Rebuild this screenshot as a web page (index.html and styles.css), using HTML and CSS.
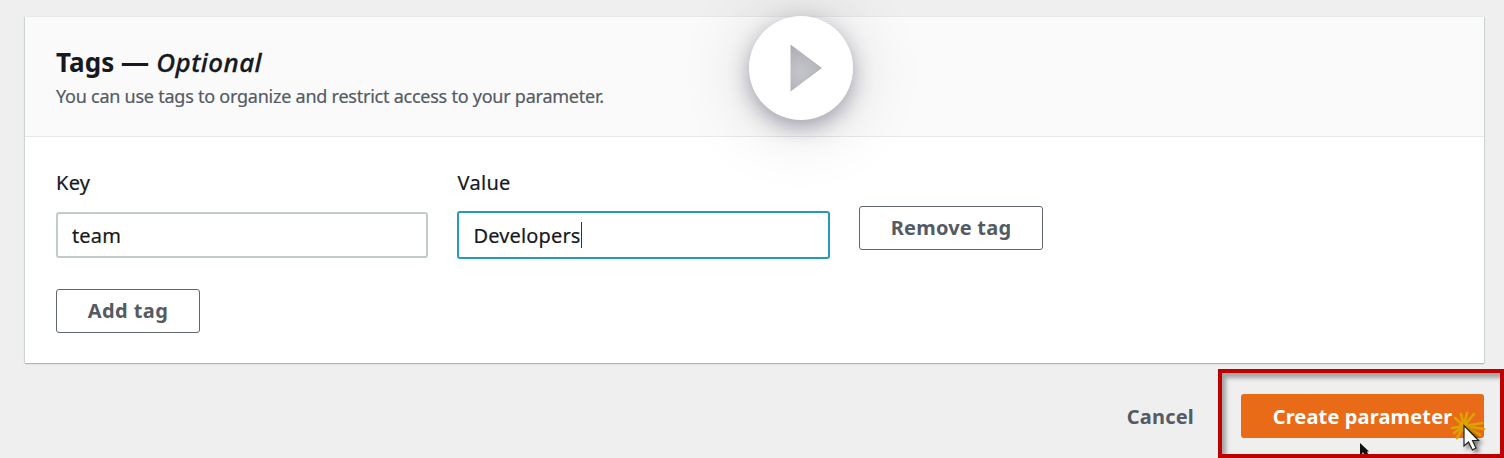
FILE: index.html
```html
<!DOCTYPE html>
<html lang="en">
<head>
<meta charset="utf-8">
<title>Create parameter</title>
<link rel="stylesheet" href="styles.css">
</head>
<body>
<main class="page">
  <section class="panel">
    <header class="panel-header">
      <h2 class="title">Tags <span class="dash">—</span> <em class="optional">Optional</em></h2>
      <p class="description">You can use tags to organize and restrict access to your parameter.</p>
    </header>
    <div class="panel-body">
      <div class="tag-row">
        <div class="field">
          <span class="label label-key">Key</span>
          <div class="input"><span class="team">team</span></div>
        </div>
        <div class="field">
          <span class="label label-value">Value</span>
          <div class="input focused"><span class="developers">Developers</span><span class="caret"></span></div>
        </div>
        <button class="button remove">Remove tag</button>
      </div>
      <button class="button add">Add tag</button>
    </div>
  </section>
  <footer class="actions">
    <span class="cancel">Cancel</span>
    <div class="highlight"><button class="button primary">Create parameter</button></div>
  </footer>
  <div class="play">
    <svg width="104" height="104" viewBox="0 0 104 104">
      <defs><radialGradient id="tri" gradientUnits="userSpaceOnUse" cx="52" cy="56" r="28"><stop offset="0" stop-color="#c4c4cb"/><stop offset="1" stop-color="#adadb2"/></radialGradient></defs>
      <path d="M41.500 28.500L73 52L41.500 75.500Z" fill="url(#tri)"/>
    </svg>
  </div>
  <svg class="pointer-small" width="12" height="12" viewBox="0 0 12 12"><path d="M2 1V12H4L5 10L6 12H10L9 9.500H11Z" fill="#111"/></svg>
  <svg class="click" width="46" height="48" viewBox="0 0 46 48">
    <path d="M14 16L11 4M14 16L5 8M14 16L2 18M14 16L4 23M14 16L7 28M14 16L24 4M14 16L17 3M14 16L32 13M14 16L34 19M14 16L30 25M14 16L21 29" stroke="#dda300" stroke-width="2.700" stroke-linecap="round"/>
    <circle cx="14" cy="16" r="5" fill="#dda300"/>
    <path class="arrow" d="M14 15.500V36L18.500 32L22.500 40L26 38L22.500 30.500H28.500Z" fill="#fff" stroke="#222" stroke-width="1.200"/>
  </svg>
</main>
</body>
</html>
```
FILE: styles.css
```css
* { box-sizing: border-box; }
body { margin: 0; background: #efefef; font-family: "Noto Sans", sans-serif; color: #16191f; }
.page { position: relative; width: 1504px; height: 458px; padding: 17px 0 0 25px; overflow: hidden; }
.panel { width: 1459px; height: 346px; background: #fff; box-shadow: 0 1px 1px #aab7b8, -1px 0 1px #d5d9d9, 1px 0 1px #d5d9d9; }
.panel-header { height: 120px; padding: 27px 31px 0; background: #fafafa; border-bottom: 1px solid #e8e8e8; }
.title { margin: 0; font-size: 26px; line-height: 37px; font-weight: 700; letter-spacing: .1px; white-space: nowrap; }
.dash { display: inline-block; transform: scaleX(1.1); margin: 0 1px; }
.optional { font-weight: 500; letter-spacing: .45px; -webkit-text-stroke: .3px #16191f; }
.description { margin: 0; font-size: 18px; line-height: 30px; letter-spacing: -.24px; color: #545b64; white-space: nowrap; -webkit-text-stroke: .2px #545b64; }
.panel-body { padding: 31px 31px 0; }
.tag-row { display: flex; gap: 30px; }
.field { display: flex; flex-direction: column; width: 371.500px; gap: 14px; }
.label { font-size: 20px; line-height: 30px; letter-spacing: .3px; -webkit-text-stroke: .2px #16191f; }
.input { display: flex; align-items: center; height: 46px; padding-left: 14px; border: 2px solid #c3caca; border-radius: 3px; font-size: 20px; letter-spacing: .15px; -webkit-text-stroke: .2px #16191f; }
.focused { margin: -1px -1px 0; height: 48px; border: 2.500px solid #2799b9; padding-left: 15px; }
.caret { width: 1px; height: 26px; background: #333; }
.button { padding: 0 0 2px; height: 44px; font: 700 20px "Noto Sans", sans-serif; letter-spacing: .2px; color: #545b64; background: #fff; border: 1.500px solid #62676d; border-radius: 3px; white-space: nowrap; }
.remove { width: 184px; margin-top: 38px; }
.add { display: block; width: 144px; margin-top: 30px; letter-spacing: .4px; }
.actions { display: flex; justify-content: flex-end; margin-top: 6px; }
.cancel { margin: 33px 24px 0 0; font-size: 20px; line-height: 30px; font-weight: 700; letter-spacing: .2px; color: #545b64; }
.highlight { width: 286px; height: 89px; padding: 21px 0 0 19px; border: 4px solid #bd0000; box-shadow: inset 4px 5px 4px #a4a4a4; }
.primary { width: 243px; color: #fff; background: #e96a17; border: 0; padding: 0; letter-spacing: .15px; }
.play { position: absolute; left: 748.500px; top: 16px; width: 104px; height: 104px; border-radius: 50%; background: #fff; box-shadow: 0 7px 20px rgba(55,50,85,.38), 0 5px 70px rgba(0,0,0,.17); }
.play svg { display: block; }
.pointer-small { position: absolute; left: 1358px; top: 442px; }
.click { position: absolute; left: 1450px; top: 410px; }
.arrow { filter: drop-shadow(3px 3px 2px rgba(0,0,0,.5)); }
```
